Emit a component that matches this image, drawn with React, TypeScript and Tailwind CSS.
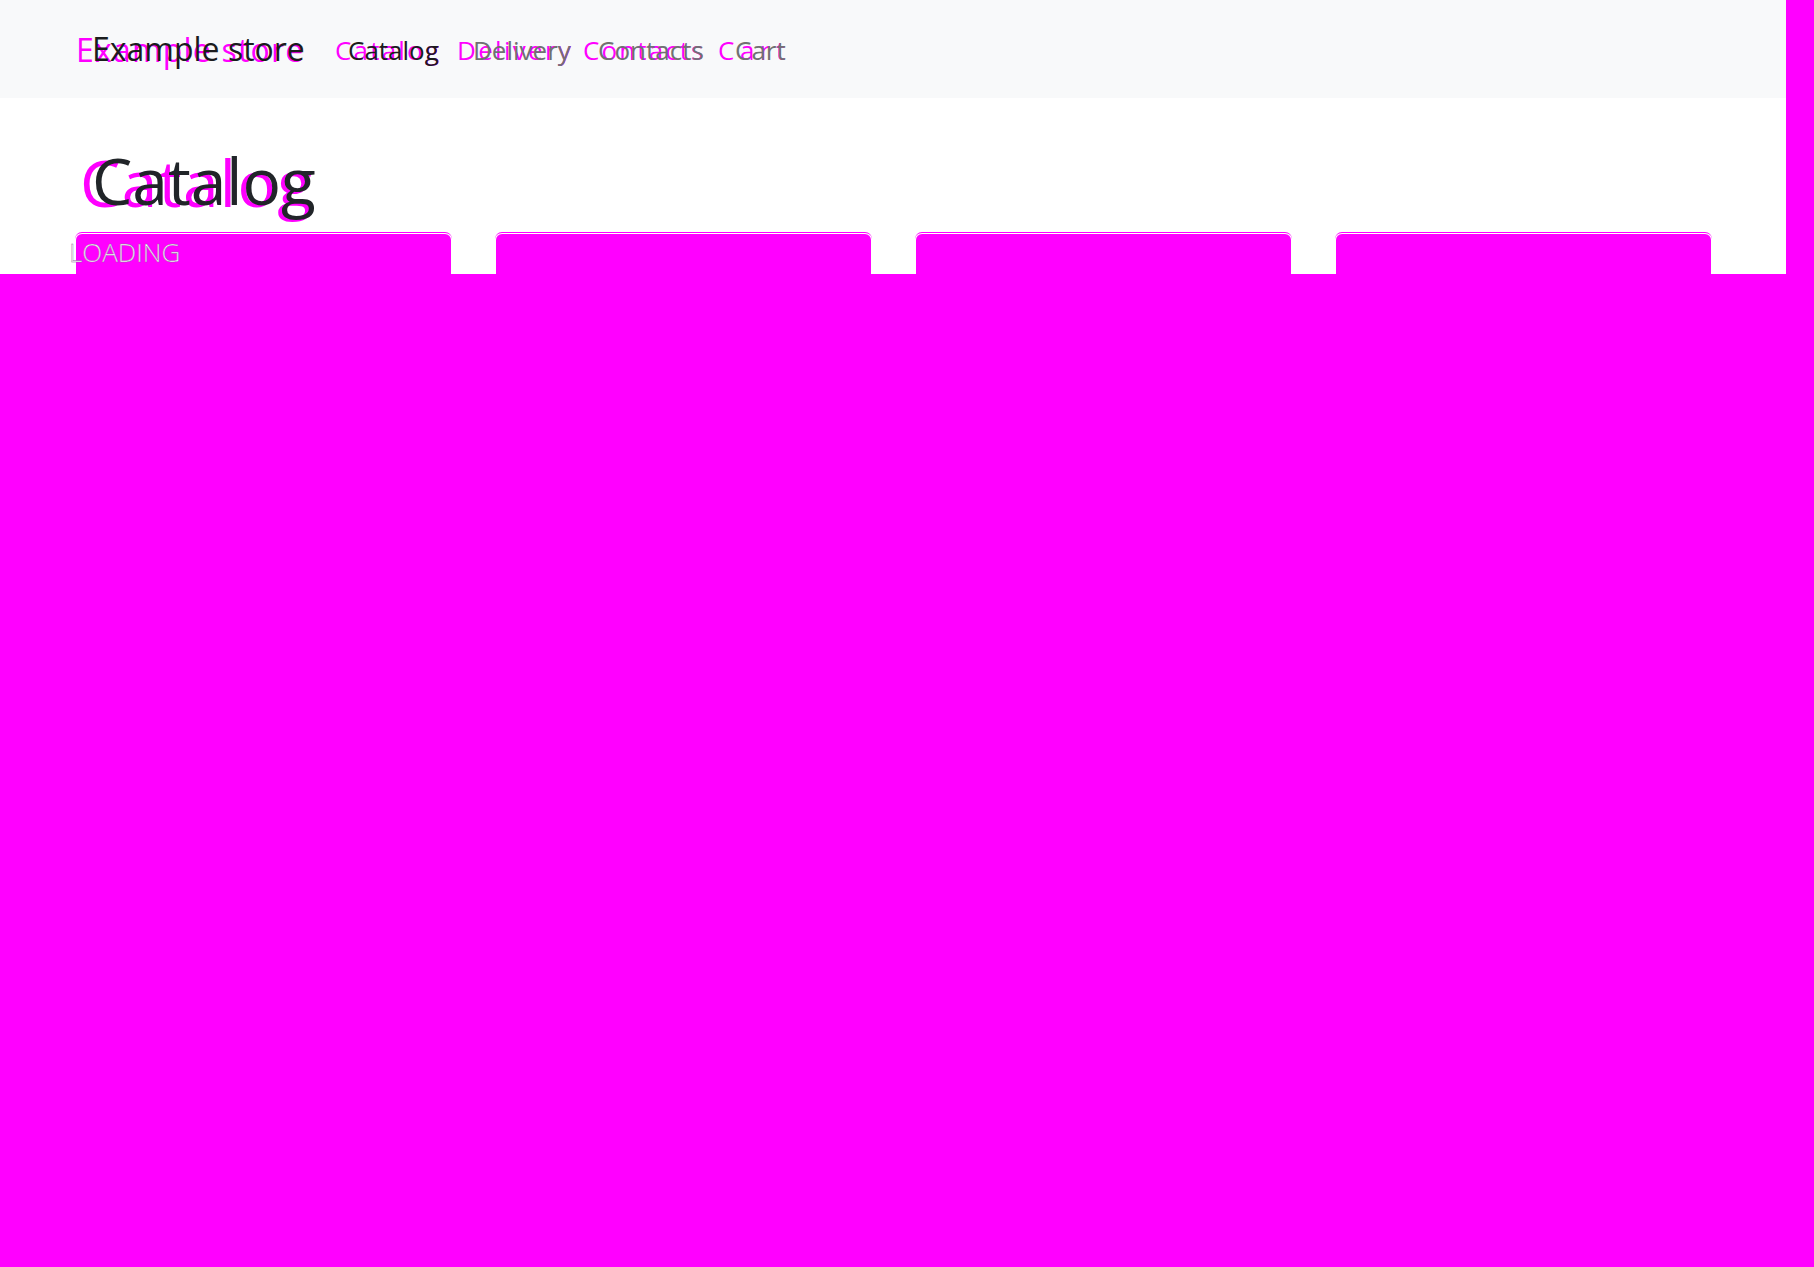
import React from 'react';

type NavWord = { label: string; width: string; tone?: string; track?: string };

const darkRow: NavWord[] = [
    { label: 'Catalog', width: 'w-[125px]', tone: 'text-[#1b1c1d]' },
    { label: 'Delivery', width: 'w-[125px]', tone: 'text-[#707172]' },
    { label: 'Contacts', width: 'w-[137px]', tone: 'text-[#707172]' },
    { label: 'Cart', width: 'w-[60px]', tone: 'text-[#707172]' },
];

const ghostRow: NavWord[] = [
    { label: 'Catalog', width: 'w-[122px]', track: 'tracking-[2.2px]' },
    { label: 'Delivery', width: 'w-[126px]', track: 'tracking-[2.3px]' },
    { label: 'Contacts', width: 'w-[135px]', track: 'tracking-[2.1px]' },
    { label: 'Cart', width: 'w-[70px]', track: 'tracking-[5.5px]' },
];

function Navbar() {
    return (
        <nav className="grid h-[98px] bg-[#f8f9fa]">
            <div className="col-start-1 row-start-1 flex items-start pl-[76px] whitespace-nowrap text-[#ff00ff]">
                <div className="w-[259px] mt-[34px] text-[32px] leading-none tracking-[1.2px]">Example store</div>
                {ghostRow.map((w) => (
                    <div key={w.label} className={`${w.width} ${w.track} mt-[37px] text-[26px] leading-none`}>
                        {w.label}
                    </div>
                ))}
            </div>
            <div className="col-start-1 row-start-1 flex items-start pl-[92px] whitespace-nowrap">
                <div className="w-[256px] mt-[33px] text-[32px] leading-none text-[#1b1c1d]">Example store</div>
                {darkRow.map((w) => (
                    <div key={w.label} className={`${w.width} ${w.tone} mt-[37px] text-[26px] leading-none`}>
                        {w.label}
                    </div>
                ))}
            </div>
        </nav>
    );
}

function Card({ loading }: { loading?: boolean }) {
    return (
        <div className="relative w-[377px] h-full rounded-t-[7px] border-t border-[#ff00ff] bg-white px-px pt-px">
            <div className="h-full rounded-t-[6px] bg-[#ff00ff]" />
            {loading && (
                <div className="absolute left-[-6px] top-[6px] text-[26px] leading-none font-light text-white [-webkit-text-stroke:0.4px_#8a6a9a]">
                    LOADING
                </div>
            )}
        </div>
    );
}

export default function App() {
    return (
        <div className="flex w-[1814px] h-[1267px] overflow-hidden bg-[#ff00ff] font-['Open_Sans',sans-serif]">
            <div className="w-[1786px] flex flex-col">
                <Navbar />
                <section className="h-[176px] bg-white flex flex-col">
                    <div className="grid mt-[51px] whitespace-nowrap">
                        <h1 className="col-start-1 row-start-1 pl-[80px] pt-[2px] text-[64px] leading-none tracking-[1.4px] text-[#ff00ff]">
                            Catalog
                        </h1>
                        <h1 className="col-start-1 row-start-1 pl-[92px] text-[64px] leading-none text-[#212529]">
                            Catalog
                        </h1>
                    </div>
                    <div className="mt-auto h-[42px] flex gap-[43px] pl-[75px]">
                        <Card loading />
                        <Card />
                        <Card />
                        <Card />
                    </div>
                </section>
            </div>
        </div>
    );
}
